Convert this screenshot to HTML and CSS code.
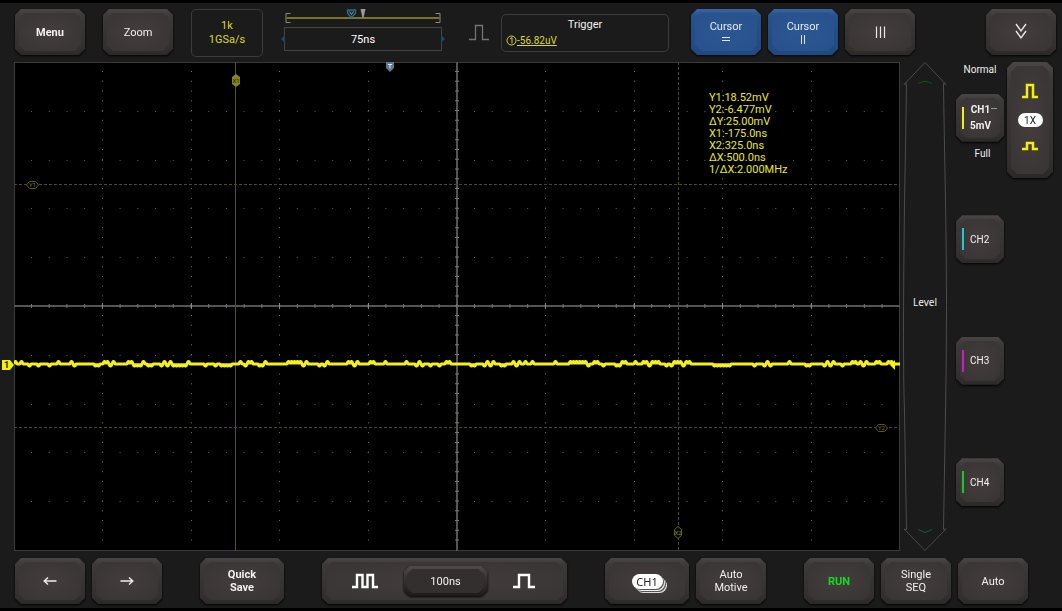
FILE: index.html
```html
<!DOCTYPE html>
<html lang="en">
<head>
<meta charset="utf-8">
<title>Oscilloscope</title>
<link rel="stylesheet" href="styles.css">
</head>
<body>
<div class="scope">
  <header class="topbar">
    <button class="key key-bold" type="button">Menu</button>
    <button class="key gap-l" type="button">Zoom</button>
    <div class="box rate gap-l"><span>1k</span><span>1GSa/s</span></div>
    <div class="timebase">
      <svg class="span" viewBox="0 0 157 16" aria-hidden="true">
        <path d="M6 4.500H1.500v9H6M151 4.500h4.500v9H151" fill="none" stroke="#8a8a8a"/>
        <path d="M2 9H155" stroke="#77752a" stroke-width="2"/>
        <path d="M63 1h8v3.500L67 8.500 63 4.500z" fill="#1b2a34" stroke="#31688a" stroke-width="1.3"/>
        <path d="M65 2.500l2 3 2-3" fill="none" stroke="#7d97a5"/>
        <path d="M76 0h5l-2 9h-1z" fill="#9a9a9a"/>
      </svg>
      <div class="delay"><i class="arrow arrow-l"></i>75ns<i class="arrow arrow-r"></i></div>
    </div>
    <svg class="edge" viewBox="0 0 20 17" aria-hidden="true"><path d="M0 15.500H6.500V1.500H13.500V15.500H20" fill="none" stroke="#747474" stroke-width="1.300"/></svg>
    <div class="box trigger">
      <span class="trigger-title">Trigger</span>
      <a class="trigger-level" href="#"><svg width="11" height="11" viewBox="0 0 11 11" aria-hidden="true"><circle cx="5.500" cy="5.500" r="4.500" fill="none" stroke="#d6d62a"/><path d="M4 4l2-1.500V8.500" fill="none" stroke="#d6d62a"/></svg><span>-56.82uV</span></a>
    </div>
    <button class="key key-blue first-cursor" type="button"><span>Cursor</span><svg width="10" height="12" viewBox="0 0 10 12" aria-hidden="true"><path d="M1 4.500H9M1 7.500H9" stroke="#dfe8f2"/></svg></button>
    <button class="key key-blue gap-s" type="button"><span>Cursor</span><svg width="10" height="12" viewBox="0 0 10 12" aria-hidden="true"><path d="M3.500 2V11M6.500 2V11" stroke="#dfe8f2"/></svg></button>
    <button class="key gap-s" type="button" aria-label="Columns"><svg width="12" height="14" viewBox="0 0 12 14" aria-hidden="true"><path d="M2.500 1.500V13M6.500 1.500V13M10.500 1.500V13" stroke="#e8e8e8" stroke-width="1.200"/></svg></button>
    <button class="key collapse" type="button" aria-label="Collapse"><svg width="12" height="18" viewBox="0 0 12 18" aria-hidden="true"><path d="M1 1l5 7 5-7M1 8l5 7 5-7" fill="none" stroke="#eee" stroke-width="1.300"/></svg></button>
  </header>

  <main class="work">
    <section class="plot" aria-label="Waveform">
      <svg class="grid" viewBox="0 0 886 489" preserveAspectRatio="none" aria-hidden="true">
        <g fill="none">
          <path class="dots-h" d="M17 49.500H870M17 98.500H870M17 146.500H870M17 195.500H870M17 293.500H870M17 342.500H870M17 390.500H870M17 439.500H870"/>
          <path class="dots-v" d="M88.500 9V481M177.500 9V481M265.500 9V481M354.500 9V481M531.500 9V481M620.500 9V481M708.500 9V481M797.500 9V481"/>
          <path class="axis" d="M0 244H886M443 0V489"/>
          <path class="tick-h" d="M17 244H870"/>
          <path class="tick-v" d="M443 9V481"/>
          <path class="tick-major" d="M88.500 241v6M177.500 241v6M265.500 241v6M354.500 241v6M531.500 241v6M620.500 241v6M708.500 241v6M797.500 241v6"/>
          <path class="cursor" d="M0 122.500H886M0 365.500H886"/>
          <path class="cursor" d="M664.500 0V489"/>
          <path class="cursor-on" d="M221.500 0V489"/>
          <path class="trace" id="trace"/>
        </g>
      </svg>
      <div class="tag tag-x1"><svg viewBox="0 0 8 13"><path d="M4 0l4 3v7l-4 3-4-3V3z" fill="#85851c"/></svg><span>X1</span></div>
      <div class="tag tag-x2"><svg viewBox="0 0 8 13"><path d="M4 .5L7.500 3.500v6L4 12.500.5 9.500v-6z" fill="#050500" stroke="#62621a"/></svg><span>X2</span></div>
      <div class="tag tag-y tag-y1"><svg viewBox="0 0 13 8"><path d="M.5 4L3.500.5h6L12.500 4l-3 3.500h-6z" fill="#000" stroke="#5c5c1c"/></svg><span>Y1</span></div>
      <div class="tag tag-y tag-y2"><svg viewBox="0 0 13 8"><path d="M.5 4L3.500.5h6L12.500 4l-3 3.500h-6z" fill="#000" stroke="#5c5c1c"/></svg><span>Y2</span></div>
      <div class="tag tag-t"><svg viewBox="0 0 8 10"><path d="M0 0h8v6L4 10 0 6z" fill="#5b7a8c"/><path d="M2 2.500h4M4 2.500v4" stroke="#dde6ea"/></svg></div>
      <div class="tag tag-ch"><svg viewBox="0 0 12 10"><path d="M0 0h8l4 5-4 5H0z" fill="#f2ee10"/></svg><span>1</span></div>
      <svg class="level-mark" viewBox="0 0 9 10" aria-hidden="true"><path d="M0 5L5 0V10z" fill="#f8f416"/></svg>
      <div class="readout">Y1:18.52mV<br>Y2:-6.477mV<br>ΔY:25.00mV<br>X1:-175.0ns<br>X2:325.0ns<br>ΔX:500.0ns<br>1/ΔX:2.000MHz</div>
    </section>

    <div class="level">
      <svg viewBox="0 0 44 489" preserveAspectRatio="none" aria-hidden="true">
        <path d="M22 .5L1 22.500 3.500 21.500Q3 60 1.500 140Q-.5 300 1.500 350L3.500 467.500 1 467 22 488.500 43 467 40.500 467.500 42.500 350Q44.500 240 42.500 140Q41 60 40.500 21.500L43 22.500z" fill="none" stroke="#4c4c4c"/>
        <path d="M15 21.500Q22 17.500 29 21.500" fill="none" stroke="#164d20"/>
        <path d="M15 467.500L22 470.500 29 467.500" fill="none" stroke="#1d5550"/>
      </svg>
      <span>Level</span>
    </div>

    <div class="channels">
      <div class="channel channel-main">
        <span class="probe">Normal</span>
        <button class="key key-ch key-bold c1" type="button"><i class="bar"></i><span>CH1<svg width="7" height="8" viewBox="0 0 7 8" aria-hidden="true"><path d="M1 3.500h6" stroke="#999"/></svg><br>5mV</span></button>
        <span class="band">Full</span>
      </div>
      <div class="channel"><button class="key key-ch c2" type="button"><i class="bar"></i><span>CH2</span></button></div>
      <div class="channel"><button class="key key-ch c3" type="button"><i class="bar"></i><span>CH3</span></button></div>
      <div class="channel"><button class="key key-ch c4" type="button"><i class="bar"></i><span>CH4</span></button></div>
    </div>

    <div class="panel scale">
      <button class="plain" type="button" aria-label="Increase scale"><svg width="16" height="16" viewBox="0 0 16 16"><path d="M0 14H5V2H11V14H16" fill="none" stroke="#f2ee10" stroke-width="2.500"/></svg></button>
      <button class="plain pill" type="button">1X</button>
      <button class="plain" type="button" aria-label="Decrease scale"><svg width="16" height="10" viewBox="0 0 16 10"><path d="M0 8H5V2H11V8H16" fill="none" stroke="#f2ee10" stroke-width="2.500"/></svg></button>
    </div>
  </main>

  <footer class="bottombar">
    <button class="key" type="button" aria-label="Left"><svg width="14" height="10" viewBox="0 0 14 10"><path d="M13.500 5H1.500M5 1.500L1.200 5 5 8.500" fill="none" stroke="#eee" stroke-width="1.400"/></svg></button>
    <button class="key gap-s" type="button" aria-label="Right"><svg width="14" height="10" viewBox="0 0 14 10"><path d="M.5 5H12.500M9 1.500L12.800 5 9 8.500" fill="none" stroke="#eee" stroke-width="1.400"/></svg></button>
    <button class="key key-wide key-bold gap-xl" type="button">Quick<br>Save</button>
    <div class="panel time-scale gap-xl">
      <button class="plain" type="button" aria-label="Slower"><svg width="26" height="16" viewBox="0 0 26 16"><path d="M0 14H5V2H10.500V14H15.500V2H21V14H26" fill="none" stroke="#fff" stroke-width="2.400"/></svg></button>
      <button class="key key-time" type="button">100ns</button>
      <button class="plain" type="button" aria-label="Faster"><svg width="22" height="16" viewBox="0 0 22 16"><path d="M0 14H6V2H16V14H22" fill="none" stroke="#fff" stroke-width="2.400"/></svg></button>
    </div>
    <button class="key key-wide gap-xl" type="button"><span class="stack">CH1</span></button>
    <button class="key gap-s" type="button">Auto<br>Motive</button>
    <button class="key key-bold run gap-xl" type="button">RUN</button>
    <button class="key gap-s" type="button">Single<br>SEQ</button>
    <button class="key gap-s" type="button">Auto</button>
  </footer>
</div>
<script src="trace.js"></script>
</body>
</html>
```
FILE: styles.css
```css
* { box-sizing: border-box; }

body {
  margin: 0;
  background: #000;
  color: #f0f0f0;
  font: 11px/13px Roboto, "Liberation Sans", sans-serif;
}

.scope {
  display: grid;
  grid-template-rows: 59px minmax(0, 1fr) 57px;
  min-height: 100vh;
  border: solid #000;
  border-width: 3px 0;
  background: #1b1b1b;
}

/* Bevelled keys */
.key {
  position: relative;
  isolation: isolate;
  display: flex;
  flex: 0 0 auto;
  flex-direction: column;
  align-items: center;
  justify-content: center;
  width: 70px;
  height: 46px;
  padding: 0;
  border: 0;
  background: none;
  color: #f0f0f0;
  font: inherit;
  text-align: center;
  filter: drop-shadow(0 1px 1px #000);
}
.key::before, .key::after, .panel::before, .panel::after {
  content: "";
  position: absolute;
  z-index: -1;
  clip-path: polygon(6px 0, calc(100% - 6px) 0, 100% 6px, 100% calc(100% - 6px), calc(100% - 6px) 100%, 6px 100%, 0 calc(100% - 6px), 0 6px);
}
.key::before, .panel::before {
  inset: 0;
  background: linear-gradient(#4a4646, #3d3939 15%, #332f2f 85%, #2b2828);
}
.key::after, .panel::after {
  inset: 4px;
  background: radial-gradient(#433e3c, #383434);
}
.key-bold { font-weight: 700; }
.key-blue { color: #e4ecf5; }
.key-blue::before { background: linear-gradient(#3a67a2, #26518a 15%, #20497f); }
.key-blue::after { background: radial-gradient(#2b5794, #28518b); }
.key-wide { width: 84px; }
.gap-s { margin-left: 7px; }
.gap-l { margin-left: 18px; }
.gap-xl { margin-left: 38px; }

.panel {
  position: relative;
  isolation: isolate;
  display: flex;
  align-items: center;
  filter: drop-shadow(0 1px 1px #000);
}
.plain {
  display: flex;
  align-items: center;
  justify-content: center;
  padding: 0;
  border: 0;
  background: none;
  color: inherit;
  font: inherit;
}

/* Top bar */
.topbar {
  display: flex;
  align-items: flex-start;
  padding: 6px 6px 0 15px;
}
.box {
  display: flex;
  flex-direction: column;
  justify-content: center;
  border: 1px solid #3c3c3c;
  border-radius: 5px;
}
.rate {
  width: 72px;
  height: 48px;
  align-items: center;
  color: #dada2a;
  line-height: 14px;
}
.timebase { flex: 1 1 157px; margin: 0 27px 0 21px; }
.span { display: block; width: 100%; height: 16px; }
.delay {
  position: relative;
  display: flex;
  align-items: center;
  justify-content: center;
  height: 24px;
  margin-top: 2px;
  border: 1px solid #444;
  color: #fff;
}
.arrow {
  position: absolute;
  top: 7px;
  border: 4px solid transparent;
}
.arrow-l { right: 100%; border-left-width: 0; border-right-color: #1c4a60; }
.arrow-r { left: 100%; border-right-width: 0; border-left-color: #1c4a60; }
.edge { flex: none; width: 20px; height: 17px; margin-top: 15px; }
.trigger {
  flex: 1 1 167px;
  height: 38px;
  margin: 5px 22px 0 12px;
  padding: 0 4px 2px;
  gap: 3px;
}
.trigger-title { text-align: center; }
.trigger-level {
  display: flex;
  align-items: center;
  color: #dada2a;
  font-size: 10px;
}
.collapse { margin-left: 71px; }

/* Working area */
.work {
  display: grid;
  grid-template-columns: minmax(0, 1fr) 44px 57px 49px;
  padding: 0 9px 0 14px;
}
.plot {
  position: relative;
  min-height: 300px;
  margin-right: 3px;
  border: 1px solid #3a3a3a;
  background: #000;
}
.grid {
  position: absolute;
  top: -1px;
  left: -1px;
  width: calc(100% + 2px);
  height: calc(100% + 2px);
}
.dots-h { stroke: #5c5c5c; stroke-dasharray: 1 16.72; }
.dots-v { stroke: #707070; stroke-dasharray: 1 8.76; }
.axis { stroke: #545454; stroke-width: 2; }
.tick-h { stroke: #777; stroke-width: 4; stroke-dasharray: 1 16.72; }
.tick-v { stroke: #777; stroke-width: 4; stroke-dasharray: 1 8.76; }
.tick-major { stroke: #888; }
.cursor { stroke: #48482f; stroke-dasharray: 3 2; }
.cursor-on { stroke: #55551f; }
.trace { stroke: #f4f01c; stroke-width: 3; stroke-linejoin: bevel; }

.tag {
  position: absolute;
  display: grid;
  place-items: center;
  width: 8px;
  height: 13px;
  color: #1c1c00;
  font-size: 6px;
  line-height: 8px;
}
.tag > * { grid-area: 1 / 1; }
.tag svg { width: 100%; height: 100%; }
.tag-y { width: 13px; height: 8px; color: #77771f; }
.tag-x1 { left: calc(25% - 4px); top: 11px; }
.tag-x2 { left: calc(75% - 4px); bottom: 11px; color: #8a8a20; }
.tag-y1 { left: 11px; top: calc(25% - 4px); }
.tag-y2 { right: 11px; top: calc(75% - 4px); }
.tag-t { left: calc(42.5% - 5px); top: -1px; height: 10px; }
.tag-ch { left: -13px; top: calc(62% - 5px); width: 12px; height: 10px; padding-right: 3px; font-size: 9px; font-weight: 700; }
.tag-ch svg { width: 12px; margin-right: -3px; }
.level-mark { position: absolute; right: 0; top: calc(62% - 5px); width: 9px; height: 10px; }
.readout {
  position: absolute;
  top: 29px;
  left: 78.5%;
  color: #e8e82c;
  line-height: 12px;
  white-space: nowrap;
}

.level { position: relative; display: grid; place-items: center; }
.level svg { position: absolute; inset: 0; width: 100%; height: 100%; }
.level span { padding-bottom: 10px; font: 10px/14px "Noto Sans", "Open Sans", sans-serif; }

.channels {
  display: grid;
  grid-template-rows: repeat(4, 1fr);
  margin-top: -5px;
  padding: 0 0 8px 9px;
}
.channel { display: flex; flex-direction: column; align-items: center; justify-content: center; }
.probe { margin-bottom: 17px; line-height: 14px; font-size: 10px; }
.band { margin: 5px 0 12px; padding-left: 5px; line-height: 14px; font-size: 10px; }
.key-ch {
  width: 48px;
  height: 48px;
  align-items: flex-start;
  padding-left: 14px;
  font-size: 10px;
}
.key-ch.key-bold { line-height: 16px; }
.bar { position: absolute; left: 6px; top: 13px; width: 2px; height: 22px; background: currentColor; }
.c1 .bar { color: #f2ee10; }
.c2 .bar { color: #1fc9cf; }
.c3 .bar { color: #c81fc8; }
.c4 .bar { color: #1fc81f; }
.c1 svg { margin-right: -7px; }

.scale {
  flex-direction: column;
  justify-content: center;
  gap: 14px;
  width: 46px;
  height: 116px;
  margin-left: 3px;
  padding-bottom: 6px;
}
.pill {
  width: 25px;
  height: 14px;
  border-radius: 7px;
  background: #fff;
  color: #222;
  font-size: 10px;
}

/* Bottom bar */
.bottombar { display: flex; align-items: flex-start; padding: 7px 34px 0 15px; }
.time-scale { flex: 1 1 245px; justify-content: space-between; height: 46px; padding: 0 32px 0 30px; }
.key-time { width: 84px; height: 30px; }
.key-time::before { background: linear-gradient(#504b49, #383433 40%, #1d1a1a); }
.key-time::after { inset: 3px; background: #332f2f; }
.run { color: #12dc1c; }
.stack {
  width: 31px;
  height: 15px;
  border-radius: 8px;
  background: #fff;
  box-shadow: 1px 1px 0 #555, 2px 2px 0 #eee, 3px 3px 0 #555, 4px 4px 0 #ddd;
  color: #222;
  font: 11px/15px "Noto Sans", sans-serif;
}
```
FILE: trace.js
```js
// Draws channel 1: a flat baseline with small, repeatable noise.
(function () {
  var seed = 7;
  function rnd() {
    seed = (seed * 16807) % 2147483647;
    return seed / 2147483647;
  }
  var base = 302, x = 0, d = 'M0 ' + base;
  while (x < 882) {
    var r = rnd();
    if (r < 0.32) {
      d += 'l1 -2.500h1l1 2.500';
      x += 3;
    } else if (r < 0.62) {
      d += 'l1 2h1l1 -2';
      x += 3;
    } else {
      var run = 2 + Math.floor(rnd() * 6);
      d += 'h' + run;
      x += run;
    }
  }
  document.getElementById('trace').setAttribute('d', d);
})();
```
